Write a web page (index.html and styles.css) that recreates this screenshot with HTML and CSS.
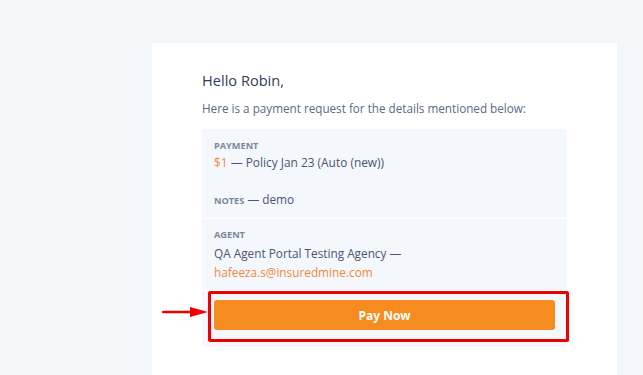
FILE: index.html
```html
<!DOCTYPE html>
<html>
<head>
<meta charset="utf-8">
<link rel="stylesheet" href="styles.css">
</head>
<body>
<div class="card">
  <h1 class="hello">Hello Robin,</h1>
  <p class="intro">Here is a payment request for the details mentioned below:</p>
  <div class="details">
    <div class="section payment">
      <div class="label">PAYMENT</div>
      <div class="value wide"><span class="orange">$1</span> — Policy Jan 23 (Auto (new))</div>
      <div class="value notes"><span class="label inline">NOTES</span> — demo</div>
    </div>
    <div class="section agent">
      <div class="label">AGENT</div>
      <div class="value gap">QA Agent Portal Testing Agency —</div>
      <div class="value orange">hafeeza.s@insuredmine.com</div>
    </div>
    <div class="pay">
      <button class="btn">Pay Now</button>
      <div class="highlight"></div>
      <svg class="arrow" width="48" height="12" viewBox="0 0 48 12"><line x1="1" y1="6" x2="32" y2="6" stroke="#ee0000" stroke-width="2.4" stroke-linecap="round"/><polygon points="28,1 46,6 28,11" fill="#ee0000"/></svg>
    </div>
  </div>
</div>
</body>
</html>
```
FILE: styles.css
```css
html, body { margin: 0; padding: 0; }
body {
  background: #f4f7fa;
  font-family: "Open Sans", "Noto Sans", sans-serif;
  height: 375px;
  overflow: hidden;
}
.card {
  background: #ffffff;
  margin: 43px 0 0 152px;
  width: 465px;
  height: 340px;
  padding: 26px 50px 0 50px;
  box-sizing: border-box;
}
.hello {
  margin: 0;
  font-size: 14.6px;
  font-weight: 400;
  color: #333b5c;
  line-height: 22px;
}
.intro {
  margin: 8px 0 0 0;
  font-size: 11.7px;
  line-height: 18px;
  color: #5b6a86;
}
.details {
  margin-top: 12px;
  background: #f4f7fb;
  border-radius: 4px;
  position: relative;
}
.section {
  padding: 10px 12px 9px 12px;
  border-bottom: 1.5px solid #ffffff;
}
.label {
  font-size: 9.2px;
  font-weight: 700;
  color: #7a889e;
  line-height: 14px;
}
.label.inline { display: inline; }
.value {
  font-size: 11.8px;
  color: #4a5670;
  line-height: 19px;
}
.value.wide { font-size: 11.9px; }
.notes { margin-top: 18px; }
.orange { color: #f0883a; }
.agent { padding-top: 9px; padding-bottom: 7.5px; }
.gap { margin-top: 2px; }
.pay {
  position: relative;
  padding: 9.5px 12px 17px 12px;
}
.btn {
  display: block;
  width: 100%;
  height: 30px;
  border: 0;
  border-radius: 3px;
  background: #f68b20;
  color: #ffffff;
  font-family: "Open Sans", "Noto Sans", sans-serif;
  font-weight: 700;
  font-size: 12px;
}
.highlight {
  position: absolute;
  left: 6px;
  top: 0.5px;
  width: 361px;
  height: 51px;
  box-sizing: border-box;
  border: 3px solid #ee0000;
  border-radius: 2px;
}
.arrow {
  position: absolute;
  left: -40px;
  top: 15px;
}
```
